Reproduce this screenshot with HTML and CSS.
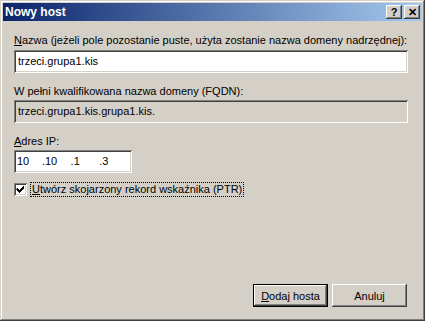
FILE: index.html
```html
<!DOCTYPE html>
<html lang="pl">
<head>
    <meta charset="UTF-8">
    <title>Nowy host</title>
    <link rel="stylesheet" href="styles.css">
</head>
<body>

    <div class="window">
        <div class="titlebar">
            <span class="title">Nowy host</span>
            <div class="title-buttons">
                <span class="tbtn">?</span>
                <span class="tbtn">&#x2715;</span>
            </div>
        </div>

        <div class="form">
            <label class="lbl lbl-first"><u>N</u>azwa (jeżeli pole pozostanie puste, użyta zostanie nazwa domeny nadrzędnej):</label>
            <div class="edit">trzeci.grupa1.kis</div>

            <label class="lbl">W pełni kwalifikowana nazwa domeny (FQDN):</label>
            <div class="edit readonly">trzeci.grupa1.kis.grupa1.kis.</div>

            <label class="lbl"><u>A</u>dres IP:</label>
            <div class="edit ip">
                <span class="oct first">10</span><span class="oct">.10</span><span class="oct">.1</span><span class="oct">.3</span>
            </div>

            <div class="check-row">
                <svg class="checkbox" width="13" height="13" viewBox="0 0 13 13">
                    <rect x="0" y="0" width="13" height="13" fill="#808080"/>
                    <rect x="1" y="1" width="12" height="12" fill="#ffffff"/>
                    <rect x="1" y="1" width="11" height="11" fill="#404040"/>
                    <rect x="2" y="2" width="10" height="10" fill="#d4d0c8"/>
                    <rect x="2" y="2" width="9" height="9" fill="#ffffff"/>
                    <path d="M3 5h1v1h1v1h1v-1h1v-1h1v-1h1v-1h1v3h-1v1h-1v1h-1v1h-1v1h-1v-1h-1v-1h-1v-1h-1z" fill="#000"/>
                </svg>
                <span class="check-label"><u>U</u>twórz skojarzony rekord wskaźnika (PTR)</span>
            </div>
        </div>

        <div class="buttons">
            <button class="btn default"><u>D</u>odaj hosta</button>
            <button class="btn">Anuluj</button>
        </div>
    </div>

</body>
</html>
```
FILE: styles.css
```css
* {
    box-sizing: border-box;
    margin: 0;
    padding: 0;
}

body {
    font-family: 'Liberation Sans', Arial, sans-serif;
    font-size: 11px;
    background: #d4d0c8;
    color: #000;
}

.window {
    width: 425px;
    height: 321px;
    display: flex;
    flex-direction: column;
    background: #d4d0c8;
    box-shadow: inset -1px -1px #404040, inset 1px 1px #d4d0c8,
                inset -2px -2px #808080, inset 2px 2px #ffffff;
}

/* Title bar */
.titlebar {
    margin: 3px 3px 0 3px;
    height: 18px;
    display: flex;
    align-items: center;
    justify-content: space-between;
    padding: 0 2px 0 2px;
    background: linear-gradient(to right, #0a246a, #a6caf0);
}

.title {
    color: #fff;
    font-weight: bold;
    font-size: 12px;
}

.title-buttons {
    display: flex;
    gap: 2px;
}

.tbtn {
    width: 16px;
    height: 14px;
    display: flex;
    align-items: center;
    justify-content: center;
    background: #d4d0c8;
    font-weight: bold;
    font-size: 11px;
    line-height: 14px;
    box-shadow: inset -1px -1px #404040, inset 1px 1px #ffffff,
                inset -2px -2px #808080;
}

/* Form */
.form {
    padding: 12px 17px 0 14px;
}

.lbl {
    display: block;
    line-height: 14px;
    margin: 11px 0 2px 0;
}

.lbl-first {
    margin-top: 0;
    margin-bottom: 3px;
}

.edit {
    height: 23px;
    line-height: 19px;
    padding: 2px 4px;
    background: #fff;
    box-shadow: inset 1px 1px #808080, inset -1px -1px #ffffff,
                inset 2px 2px #404040, inset -2px -2px #d4d0c8;
}

.readonly {
    background: #d4d0c8;
}

.ip {
    width: 118px;
    padding-left: 3px;
    display: flex;
}

.oct {
    display: inline-block;
    width: 30px;
}

.oct.first {
    width: 26px;
}

.check-row {
    margin-top: 9px;
    display: flex;
    align-items: center;
    height: 15px;
}

.checkbox {
    display: block;
    flex: none;
}

.check-label {
    margin-left: 4px;
    padding: 0 1px;
    line-height: 13px;
    outline: 1px dotted #000;
}

/* Buttons */
.buttons {
    margin-top: auto;
    display: flex;
    justify-content: flex-end;
    gap: 4px;
    padding: 0 18px 14px 0;
}

.btn {
    width: 75px;
    height: 23px;
    border: none;
    background: #d4d0c8;
    font-family: inherit;
    font-size: 11px;
    color: #000;
    box-shadow: inset -1px -1px #404040, inset 1px 1px #ffffff,
                inset -2px -2px #808080;
}

.btn.default {
    box-shadow: inset 0 0 0 1px #000, inset -2px -2px #404040,
                inset 2px 2px #ffffff, inset -3px -3px #808080;
}
```
